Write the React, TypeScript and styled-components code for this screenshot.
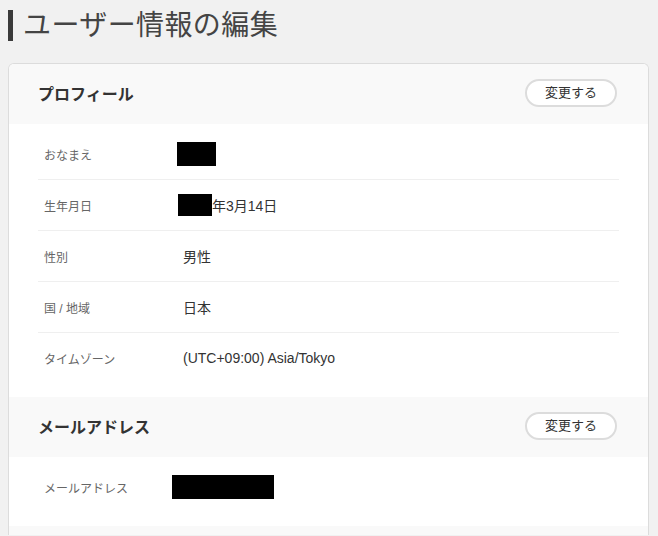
import React from "react";
import styled, { createGlobalStyle } from "styled-components";

const GlobalStyle = createGlobalStyle`
  html, body {
    margin: 0;
    padding: 0;
    background: #f1f1f1;
    font-family: "Liberation Sans", "Noto Sans CJK JP", sans-serif;
    color: #333;
  }
`;

const Page = styled.div`
  padding: 10px 9px 0 8px;
`;

const TitleRow = styled.h1`
  display: flex;
  align-items: center;
  gap: 10px;
  margin: 0 0 22px 0;
  font-size: 28px;
  font-weight: normal;
  line-height: 31px;
  letter-spacing: 0.4px;
  color: #444;
`;

const TitleBar = styled.span`
  display: block;
  width: 5px;
  height: 31px;
  background: #3a3a3a;
`;

const Card = styled.div`
  width: 641px;
  box-sizing: border-box;
  background: #fff;
  border: 1px solid #dcdcdc;
  border-bottom: none;
  border-radius: 6px 6px 0 0;
  overflow: hidden;
`;

const SectionHeader = styled.div`
  display: flex;
  align-items: center;
  justify-content: space-between;
  box-sizing: border-box;
  height: 60px;
  padding: 0 31px 3px 29px;
  background: #f9f9f9;
`;

const SectionTitle = styled.h2`
  margin: 0;
  font-size: 16px;
  font-weight: bold;
  color: #333;
`;

const ChangeButton = styled.button`
  box-sizing: border-box;
  width: 92px;
  height: 28px;
  border: 2px solid #dcdcdc;
  border-radius: 14px;
  background: #fff;
  font-family: inherit;
  font-size: 13px;
  line-height: 24px;
  color: #333;
  padding: 0;
  cursor: pointer;
`;

const RowList = styled.div`
  padding: 5px 29px 14px 29px;
`;

const Row = styled.div<{ $labelWidth: number }>`
  display: grid;
  grid-template-columns: ${(p) => p.$labelWidth}px 1fr;
  align-items: center;
  height: 50px;
  padding-left: 6px;
  border-top: 1px solid #efefef;
  &:first-child {
    border-top: none;
  }
`;

const Label = styled.span`
  font-size: 12px;
  color: #666;
`;

const Value = styled.span`
  font-size: 14px;
  color: #333;
  display: flex;
  align-items: center;
`;

const Redacted = styled.span<{ $w: number; $h: number; $shift?: number }>`
  display: inline-block;
  width: ${(p) => p.$w}px;
  height: ${(p) => p.$h}px;
  background: #000;
  margin-left: ${(p) => p.$shift ?? 0}px;
`;

const Footer = styled.div`
  height: 9px;
  background: #f9f9f9;
`;

export default function App() {
  return (
    <>
      <GlobalStyle />
      <Page>
        <TitleRow>
          <TitleBar />
          ユーザー情報の編集
        </TitleRow>
        <Card>
          <SectionHeader>
            <SectionTitle>プロフィール</SectionTitle>
            <ChangeButton>変更する</ChangeButton>
          </SectionHeader>
          <RowList>
            <Row $labelWidth={139}>
              <Label>おなまえ</Label>
              <Value>
                <Redacted $w={39} $h={24} $shift={-6} />
              </Value>
            </Row>
            <Row $labelWidth={139}>
              <Label>生年月日</Label>
              <Value>
                <Redacted $w={34} $h={22} $shift={-5} />
                年3月14日
              </Value>
            </Row>
            <Row $labelWidth={139}>
              <Label>性別</Label>
              <Value>男性</Value>
            </Row>
            <Row $labelWidth={139}>
              <Label>国 / 地域</Label>
              <Value>日本</Value>
            </Row>
            <Row $labelWidth={139}>
              <Label>タイムゾーン</Label>
              <Value>(UTC+09:00) Asia/Tokyo</Value>
            </Row>
          </RowList>
          <SectionHeader>
            <SectionTitle>メールアドレス</SectionTitle>
            <ChangeButton>変更する</ChangeButton>
          </SectionHeader>
          <RowList>
            <Row $labelWidth={128}>
              <Label>メールアドレス</Label>
              <Value>
                <Redacted $w={102} $h={24} />
              </Value>
            </Row>
          </RowList>
          <Footer />
        </Card>
      </Page>
    </>
  );
}
